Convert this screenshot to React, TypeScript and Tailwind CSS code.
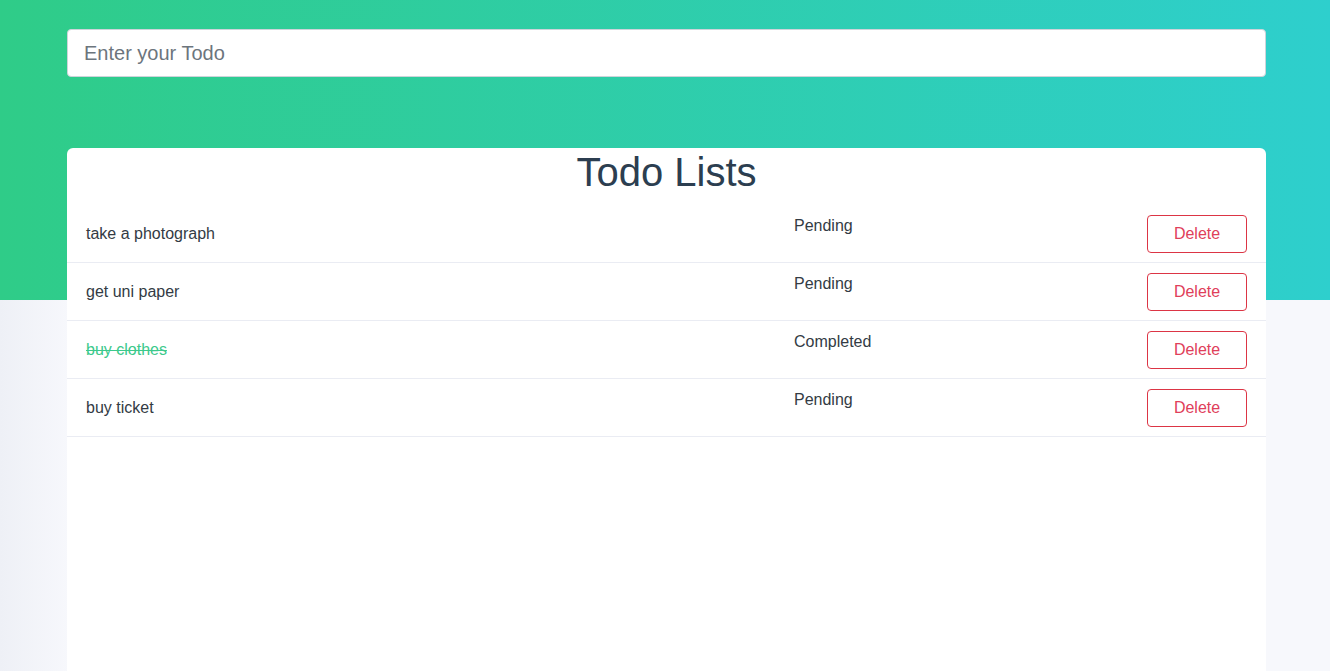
import { useState } from "react";

type Todo = { id: number; title: string; done: boolean };

const initial: Todo[] = [
  { id: 1, title: "take a photograph", done: false },
  { id: 2, title: "get uni paper", done: false },
  { id: 3, title: "buy clothes", done: true },
  { id: 4, title: "buy ticket", done: false },
];

export default function App() {
  const [todos, setTodos] = useState<Todo[]>(initial);
  const [text, setText] = useState("");

  return (
    <div
      className="min-h-screen bg-no-repeat bg-[linear-gradient(to_right,#2fcc88,#2ecfcd),linear-gradient(to_right,#eef0f6,#f7f8fc_70px)] bg-[length:100%_300px,100%_100%] pt-[29px] pl-[67px] text-[#2c3e50]"
      style={{ fontFamily: '"Liberation Sans", Arial, sans-serif' }}
    >
      <div className="w-[1199px]">
        {/* Add todo */}
        <input
          value={text}
          onChange={(e) => setText(e.target.value)}
          onKeyDown={(e) => {
            if (e.key === "Enter" && text.trim()) {
              setTodos([...todos, { id: Date.now(), title: text.trim(), done: false }]);
              setText("");
            }
          }}
          placeholder="Enter your Todo"
          className="block w-full h-[48px] rounded-[4px] border border-[#ced4da] bg-white px-4 text-[20px] text-[#495057] placeholder:text-[#6c757d] outline-none"
        />

        {/* List card */}
        <div className="mt-[71px] min-h-[523px] rounded-t-[6px] bg-white">
          <h1 className="text-center text-[40px] leading-[48px] text-[#2c3e50] mb-[9px]">Todo Lists</h1>
          {todos.map((todo) => (
            <div key={todo.id} className="flex h-[58px] items-center border-b border-[#eaecf3] px-[19px] text-[16px] leading-6">
              <div
                className={
                  todo.done
                    ? "flex-1 text-[#3cc98c] line-through cursor-pointer"
                    : "flex-1 text-[#333b44] cursor-pointer"
                }
                onClick={() =>
                  setTodos(todos.map((t) => (t.id === todo.id ? { ...t, done: !t.done } : t)))
                }
              >
                {todo.title}
              </div>
              <div className="w-[353px] self-start pt-[9px] text-[#333b44]">
                {todo.done ? "Completed" : "Pending"}
              </div>
              <button
                onClick={() => setTodos(todos.filter((t) => t.id !== todo.id))}
                className="h-[38px] w-[100px] rounded-[4px] border border-[#dc3545] bg-white text-[16px] text-[#e0405a]"
              >
                Delete
              </button>
            </div>
          ))}
        </div>
      </div>
    </div>
  );
}
